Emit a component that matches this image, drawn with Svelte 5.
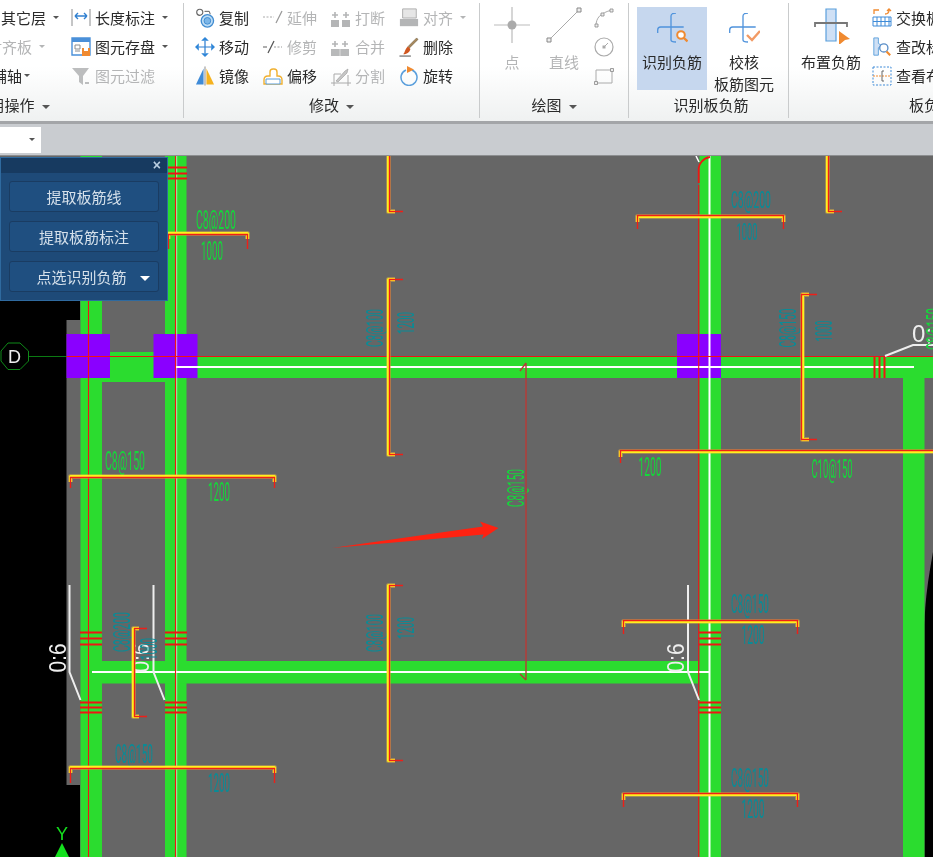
<script>
  // rebars: h = horizontal with hooks down, v = vertical with hook to the right
  const bars = [
    { t: 'h', x1: 168, x2: 247, y: 233, hook: 16, open: true, off: 1 },
    { t: 'v', x: 388, y1: 150, y2: 211, end: 403, off: 1 },
    { t: 'v', x: 388, y1: 279, y2: 454, end: 403, off: 1 },
    { t: 'v', x: 388, y1: 585, y2: 760, end: 403, off: 1 },
    { t: 'v', x: 827, y1: 150, y2: 211, end: 842, off: 1 },
    { t: 'h', x1: 637, x2: 783, y: 216, hook: 13, off: -1 },
    { t: 'v', x: 802, y1: 294, y2: 439, end: 817, off: -1 },
    { t: 'h', x1: 620, x2: 950, y: 451, hook: 12, off: -1 },
    { t: 'h', x1: 70, x2: 274, y: 476, hook: 12, off: 1 },
    { t: 'v', x: 133, y1: 628, y2: 716, end: 147, off: 1 },
    { t: 'h', x1: 70, x2: 274, y: 767, hook: 16, off: 1 },
    { t: 'h', x1: 623, x2: 797, y: 621, hook: 13, off: -1 },
    { t: 'h', x1: 623, x2: 797, y: 794, hook: 13, off: -1 }
  ];

  const yellowPath = (b) => {
    if (b.t === 'h') return `M${b.x1 + 0.5} ${b.y + 6}V${b.y + 0.5}H${b.x2 + 0.5}V${b.y + 6}`;
    return `M${b.end - 8} ${b.y1 + 0.5}H${b.x + 0.5}V${b.y2 + 0.5}H${b.end - 8}`;
  };
  const redPath = (b) => {
    if (b.t === 'h') return `M${b.x1 + 0.5} ${b.y + b.hook}V${b.y + b.off + 0.5}H${b.x2 + 0.5}V${b.y + b.hook}`;
    return `M${b.end} ${b.y1 + 0.5}H${b.x + b.off + 0.5}V${b.y2 + 0.5}H${b.end}`;
  };

  const GREEN = '#14d83a';
  const TEAL = '#0a8b96';

  // x, y = centre of the note, w = length along the text, h = glyph height
  const notes = [
    { s: 'C8@200', x: 216, y: 220, w: 40, h: 19, c: GREEN },
    { s: '1000', x: 212, y: 251, w: 22, h: 19, c: GREEN },
    { s: 'C8@150', x: 125, y: 461, w: 40, h: 19, c: GREEN },
    { s: '1200', x: 219, y: 492, w: 22, h: 19, c: GREEN },
    { s: 'C10@150', x: 832, y: 469, w: 41, h: 19, c: GREEN },
    { s: '1200', x: 650, y: 467, w: 23, h: 19, c: GREEN },
    { s: 'C8@150', x: 515, y: 488, w: 38, h: 18, c: GREEN, rot: true },
    { s: 'C8@150', x: 934, y: 329, w: 42, h: 18, c: GREEN, rot: true },
    { s: 'C8@200', x: 751, y: 199, w: 40, h: 18, c: TEAL },
    { s: '1000', x: 747, y: 231, w: 21, h: 18, c: TEAL },
    { s: 'C8@150', x: 787, y: 328, w: 39, h: 18, c: TEAL, rot: true },
    { s: '1000', x: 823, y: 331, w: 21, h: 18, c: TEAL, rot: true },
    { s: 'C8@100', x: 374, y: 328, w: 38, h: 18, c: TEAL, rot: true },
    { s: '1200', x: 405, y: 323, w: 22, h: 18, c: TEAL, rot: true },
    { s: 'C8@100', x: 374, y: 633, w: 38, h: 18, c: TEAL, rot: true },
    { s: '1200', x: 405, y: 628, w: 22, h: 18, c: TEAL, rot: true },
    { s: 'C8@200', x: 121, y: 632, w: 40, h: 18, c: TEAL, rot: true },
    { s: '1000', x: 148, y: 649, w: 22, h: 18, c: TEAL, rot: true },
    { s: 'C8@150', x: 134, y: 754, w: 38, h: 19, c: TEAL },
    { s: '1200', x: 219, y: 783, w: 22, h: 19, c: TEAL },
    { s: 'C8@150', x: 750, y: 604, w: 38, h: 19, c: TEAL },
    { s: '1200', x: 753, y: 635, w: 23, h: 19, c: TEAL },
    { s: 'C8@150', x: 750, y: 778, w: 38, h: 19, c: TEAL },
    { s: '1200', x: 753, y: 809, w: 23, h: 19, c: TEAL }
  ];

  // stirrup ticks: three short red lines across a beam
  const tickRows = [
    { x: 165, ys: [167, 173, 178] },
    { x: 80, ys: [632, 638, 644] },
    { x: 165, ys: [632, 638, 644] },
    { x: 699, ys: [632, 638, 644] },
    { x: 80, ys: [702, 707, 712] },
    { x: 165, ys: [702, 707, 712] },
    { x: 699, ys: [702, 707, 712] }
  ];

  const leaders = [
    { x: 69.5, tx: 66 },
    { x: 153.5, tx: 149 },
    { x: 688, tx: 684 }
  ];
</script>

<div class="app">
  <div class="ribbon">
    <section class="group g1">
      <div class="body tools">
        <div class="col first">
          <div class="row"><span>其它层</span><i class="caret"></i></div>
          <div class="row off r2"><span>对齐板</span><i class="caret"></i></div>
          <div class="row r3"><span>辅轴</span><i class="caret"></i></div>
        </div>
        <div class="col">
          <div class="row">
            <svg class="ico" viewBox="0 0 20 20">
              <path d="M1 1v17M19 1v17" stroke="#8a8c8e" fill="none" />
              <path d="M4 8h12M4 8l3-3M4 8l3 3M16 8l-3-3M16 8l-3 3" stroke="#2f7fd0" stroke-width="1.4" fill="none" />
            </svg>
            <span>长度标注</span><i class="caret"></i>
          </div>
          <div class="row">
            <svg class="ico" viewBox="0 0 20 20">
              <path d="M1 1h18v17H1z" fill="#fff" stroke="#4a90d9" stroke-width="1.4" />
              <path d="M1 1h18v4H1z" fill="#4a90d9" />
              <path d="M4 8h5v4H4zM4 14h5" stroke="#8a8c8e" fill="none" />
              <path d="M11 11h8v8h-8z" fill="#f08a30" />
              <path d="M13 11h4v3h-4z" fill="#fff" />
            </svg>
            <span>图元存盘</span><i class="caret"></i>
          </div>
          <div class="row off">
            <svg class="ico" viewBox="0 0 20 20">
              <path d="M1 2h17l-6 8v9l-4-3v-6z" fill="#bcbdbe" />
              <path d="M14 17h4" stroke="#bcbdbe" stroke-width="2" />
            </svg>
            <span>图元过滤</span>
          </div>
        </div>
      </div>
      <div class="foot">通用操作<i class="caret"></i></div>
    </section>

    <section class="group g2">
      <div class="body grid">
        <div class="row">
          <svg class="ico" viewBox="0 0 21 20">
            <circle cx="5" cy="4" r="3.2" fill="#fff" stroke="#666" stroke-width="1.2" />
            <path d="M10 3h5l1 3" stroke="#555" fill="none" />
            <circle cx="13" cy="13" r="6.5" fill="#bcdcf5" stroke="#3f8bd0" stroke-width="1.4" />
            <circle cx="13" cy="13" r="3.5" fill="#7bb6e8" stroke="#3f8bd0" />
          </svg>
          <span>复制</span>
        </div>
        <div class="row off">
          <svg class="ico" viewBox="0 0 20 20">
            <path d="M0 9h11" stroke="#aaa" stroke-dasharray="2 1.5" />
            <path d="M13 15l6-12" stroke="#999" stroke-width="1.3" />
          </svg>
          <span>延伸</span>
        </div>
        <div class="row off">
          <svg class="ico" viewBox="0 0 20 20">
            <path d="M0 12h8v7H0zM11 12h8v7h-8z" fill="#b4b5b6" />
            <path d="M4 4v6M1 7h6M15 4v6M12 7h6" stroke="#b4b5b6" stroke-width="1.6" />
          </svg>
          <span>打断</span>
        </div>
        <div class="row off">
          <svg class="ico" viewBox="0 0 20 22">
            <path d="M3 1h15v10H3z" fill="#e6e6e6" stroke="#aaa" />
            <path d="M0 12h20v8H0z" fill="#b4b5b6" />
          </svg>
          <span>对齐</span><i class="caret"></i>
        </div>

        <div class="row">
          <svg class="ico" viewBox="0 0 21 21">
            <path d="M10.5 4v13M4 10.5h13" stroke="#2f7fd0" stroke-width="1.3" />
            <path d="M10.5 0l4 4h-8zM10.5 21l4-4h-8zM0 10.5l4-4v8zM21 10.5l-4-4v8z" fill="#2f86d8" />
          </svg>
          <span>移动</span>
        </div>
        <div class="row off">
          <svg class="ico" viewBox="0 0 20 20">
            <path d="M0 10h4" stroke="#777" stroke-width="1.2" />
            <path d="M5 16l6-12" stroke="#555" stroke-width="1.2" />
            <path d="M11 10h8" stroke="#999" stroke-dasharray="2 1.5" />
          </svg>
          <span>修剪</span>
        </div>
        <div class="row off">
          <svg class="ico" viewBox="0 0 20 20">
            <path d="M0 12h18v7H0z" fill="#b8b9ba" />
            <path d="M4 4v6M1 7h6M14 4v6M11 7h6" stroke="#b4b5b6" stroke-width="1.6" />
            <path d="M9 12v7" stroke="#ddd" />
          </svg>
          <span>合并</span>
        </div>
        <div class="row">
          <svg class="ico" viewBox="0 0 20 21">
            <path d="M9 10l9-9 1.5 1.5-9 9z" fill="#a98a5c" stroke="#6b5a40" stroke-width=".6" />
            <path d="M9 10l2.500 2.500c-1 4-4 5.500-7.500 5.500 2-2 2-6 5-8z" fill="#d0561f" />
            <path d="M0 20h12" stroke="#444" />
          </svg>
          <span>删除</span>
        </div>

        <div class="row">
          <svg class="ico" viewBox="0 0 21 20">
            <path d="M9 2v17H1z" fill="#3f8bd8" />
            <path d="M10.500 0v20" stroke="#888" />
            <path d="M12 2v17h8z" fill="#f5b21f" />
          </svg>
          <span>镜像</span>
        </div>
        <div class="row">
          <svg class="ico" viewBox="0 0 20 20">
            <path d="M1 18v-4c0-3 2-4 4-4h2V6c0-2 1-3 3-3h1c2 0 3 1 3 3v4h1c2 0 4 1 4 4v4z" fill="#fff" stroke="#f0b030" stroke-width="1.400" />
            <path d="M3 13h14v5H3z" fill="#fff" stroke="#5b9fdc" />
          </svg>
          <span>偏移</span>
        </div>
        <div class="row off">
          <svg class="ico" viewBox="0 0 20 20">
            <path d="M0 17h20M3 8v12M17 9v11M3 8h7" stroke="#aaa" fill="none" />
            <path d="M5 15l9-10 3-2-1 4-9 9z" fill="#c6c6c6" stroke="#999" stroke-width=".6" />
          </svg>
          <span>分割</span>
        </div>
        <div class="row">
          <svg class="ico" viewBox="0 0 20 20">
            <path d="M7 4a8 8 0 1 0 6 0" fill="none" stroke="#5b9fdc" stroke-width="1.500" />
            <path d="M8 0l7 3.500-7 3.500z" fill="#f08a30" />
          </svg>
          <span>旋转</span>
        </div>
      </div>
      <div class="foot">修改<i class="caret"></i></div>
    </section>

    <section class="group g3">
      <div class="body draw">
        <div class="big off">
          <svg class="big-ico" viewBox="0 0 38 38">
            <path d="M19 1v36M1 19h36" stroke="#bbb" stroke-width="1.200" />
            <circle cx="19" cy="19" r="4.500" fill="#aaa" />
          </svg>
          <span>点</span>
        </div>
        <div class="big off">
          <svg class="big-ico" viewBox="0 0 38 38">
            <path d="M4 34L34 4" stroke="#aaa" />
            <path d="M2 32h4v4H2zM32 2h4v4h-4z" fill="#eee" stroke="#888" />
          </svg>
          <span>直线</span>
        </div>
        <div class="mini">
          <svg viewBox="0 0 20 20">
            <path d="M2 18C2 10 6 5 18 2" fill="none" stroke="#aaa" />
            <path d="M1 16h3v3H1zM7 5h3v3H7zM16 1h3v3h-3z" fill="#eee" stroke="#888" stroke-width=".8" />
          </svg>
          <svg viewBox="0 0 20 20">
            <circle cx="10" cy="10" r="9" fill="none" stroke="#aaa" stroke-width="1.200" />
            <path d="M10 10l4-4" stroke="#aaa" />
            <path d="M8.500 8.500h3v3h-3z" fill="#aaa" />
          </svg>
          <svg viewBox="0 0 20 20">
            <path d="M2 4h16v13H2z" fill="none" stroke="#aaa" />
            <path d="M.5 15.500h3v3h-3zM16.500 2.500h3v3h-3z" fill="#eee" stroke="#888" stroke-width=".8" />
          </svg>
        </div>
      </div>
      <div class="foot">绘图<i class="caret"></i></div>
    </section>

    <section class="group g4">
      <div class="body neg">
        <div class="big active">
          <svg class="neg-ico" viewBox="0 0 31 30">
            <path d="M14 3c0-2 2-3 5-3M14 3v24c0 2 2 2 5 2M.700 20v-3c0-2 1-3 3-3h23" fill="none" stroke="#4f93dc" stroke-width="1.300" />
            <circle cx="24" cy="22" r="3.800" fill="#fff" stroke="#f08a30" stroke-width="2" />
            <path d="M27 25l3.500 3.500" stroke="#f08a30" stroke-width="2.400" />
          </svg>
          <span>识别负筋</span>
        </div>
        <div class="big">
          <svg class="neg-ico" viewBox="0 0 31 30">
            <path d="M14 3c0-2 2-3 5-3M14 3v24c0 2 2 2 5 2M.700 20v-3c0-2 1-3 3-3h23" fill="none" stroke="#4f93dc" stroke-width="1.300" />
            <path d="M18 22l5 5 8-9" fill="none" stroke="#f29a64" stroke-width="2.400" />
          </svg>
          <span>校核</span>
          <span>板筋图元</span>
        </div>
      </div>
      <div class="foot">识别板负筋</div>
    </section>

    <section class="group g5">
      <div class="body tools5">
        <div class="big">
          <svg class="big-ico" viewBox="0 0 38 38">
            <path d="M14 3h10v32H14z" fill="#cfe0f5" stroke="#5b9fdc" stroke-width="1.200" />
            <path d="M3 21v-4h32v4" fill="none" stroke="#777" stroke-width="1.800" />
            <path d="M27 25l11 8-5 1-6 5z" fill="#f08a30" />
          </svg>
          <span>布置负筋</span>
        </div>
        <div class="col small-col">
          <div class="row">
            <svg class="ico" viewBox="0 0 20 20">
              <path d="M1 9h18v9H1zM1 13.500h18M5 9v9M9 9v9M13 9v9M17 9v9" fill="none" stroke="#3f8bd8" />
              <path d="M2 6V2h5M13 6c3 0 4-1 4-4M15 3l2-2 2 2" fill="none" stroke="#f08a30" stroke-width="1.300" />
            </svg>
            <span>交换板筋</span>
          </div>
          <div class="row">
            <svg class="ico" viewBox="0 0 20 22">
              <path d="M1 1h5v6l3 2-3 3v8H1z" fill="#cfe0f5" stroke="#5b9fdc" />
              <circle cx="12" cy="12" r="4.500" fill="#fff" stroke="#5b8fc8" stroke-width="1.500" />
              <path d="M15 16l4 4" stroke="#f08a30" stroke-width="2.400" />
            </svg>
            <span>查改标注</span>
          </div>
          <div class="row">
            <svg class="ico" viewBox="0 0 20 20">
              <path d="M1 1h18v18H1z" fill="none" stroke="#3f8bd8" stroke-dasharray="2 1.500" />
              <path d="M1 10h18" stroke="#f08a30" stroke-dasharray="2 1" />
              <path d="M12 5h-2v10h2" fill="none" stroke="#666" />
            </svg>
            <span>查看布筋</span>
          </div>
        </div>
      </div>
      <div class="foot">板负筋二次编辑</div>
    </section>
  </div>

  <div class="strip">
    <div class="combo"><i class="caret"></i></div>
  </div>

  <div class="canvas">
    <svg class="cad" viewBox="0 156 933 701">
      <rect x="0" y="156" width="933" height="701" fill="#666" />
      <path d="M0 290H80V320H66.500V785H80V857H0Z" fill="#000" />
      <path d="M933 552C928 580 925 600 924.500 625V857H933Z" fill="#000" />

      <!-- beams -->
      <g fill="#2bdc2f">
        <rect x="80.500" y="156" width="21.500" height="701" />
        <rect x="165" y="156" width="21.500" height="701" />
        <rect x="699.500" y="156" width="21.500" height="701" />
        <rect x="903" y="357" width="21.500" height="500" />
        <rect x="102" y="352" width="63" height="30" />
        <rect x="186" y="357" width="747" height="21" />
        <rect x="102" y="661" width="596" height="22.500" />
      </g>
      <g fill="#8a00ff">
        <rect x="66.500" y="334" width="43.500" height="44" />
        <rect x="153.500" y="334" width="44" height="44" />
        <rect x="677" y="334" width="44" height="44" />
      </g>

      <!-- axis -->
      <path d="M28 356.500H66.500" stroke="#0b7a12" />
      <path d="M8 343L20 343L28.500 351L28.500 361L20 369.500L8 369.500L1 361L1 351Z" fill="none" stroke="#0f8a18" />
      <text class="axis" x="14.500" y="362.500" text-anchor="middle">D</text>
      <text class="axis-y" x="62" y="840" text-anchor="middle">Y</text>
      <path d="M62 843L69 857H55Z" fill="#14e01e" />

      <!-- white centre lines -->
      <g stroke="#fff" fill="none">
        <path d="M176 367H914" stroke-width="2" />
        <path d="M92 672H709" stroke-width="2" />
        <path d="M709.500 156V857" stroke-width="2" />
        <path d="M176.500 156V857" stroke-width="1.500" opacity=".5" />
      </g>

      <!-- red axis lines -->
      <g stroke="#f01414" fill="none" stroke-width="1.100">
        <path d="M66.500 356.500H933" />
        <path d="M88.500 290V857" />
        <path d="M175.500 156V857" />
        <path d="M698.700 185V857" />
        <path d="M698.700 183V168C699 164 703 158 710 157" stroke-width="1.800" />
      </g>
      <path d="M696 156L699 162" stroke="#fff" stroke-width="1.500" />

      {#each tickRows as row}
        {#each row.ys as y}
          <path d="M{row.x} {y + 0.5}h22" stroke="#f01414" stroke-width="2" />
        {/each}
      {/each}
      <path d="M874.500 357v21M879.500 357v21M884.500 357v21" stroke="#f01414" stroke-width="2" />

      <!-- leaders -->
      {#each leaders as l}
        <path d="M{l.x} 585V672L{l.x + 11} 700" fill="none" stroke="#eee" stroke-width="2" />
        <text class="lead" textLength="29" lengthAdjust="spacingAndGlyphs" transform="translate({l.tx} 658) rotate(-90)" text-anchor="middle">0:6</text>
      {/each}
      <path d="M885 356L913 345H933" fill="none" stroke="#eee" stroke-width="2" />
      <text class="lead" x="912" y="342">0;6</text>

      <!-- notes -->
      {#each notes as n}
        <text
          class="note"
          fill={n.c}
          font-size={n.h * 1.35}
          textLength={n.w}
          lengthAdjust="spacingAndGlyphs"
          text-anchor="middle"
          dominant-baseline="central"
          transform="translate({n.x} {n.y}){n.rot ? ' rotate(-90)' : ''}"
        >{n.s}</text>
      {/each}

      <!-- rebars -->
      {#each bars as b}
        <path d={yellowPath(b)} fill="none" stroke="#ffc23c" stroke-width="5" stroke-linejoin="round" opacity=".4" />
        <path d={yellowPath(b)} fill="none" stroke="#fff01e" stroke-width="3" stroke-linejoin="round" />
        <path d={redPath(b)} fill="none" stroke="#ee1f18" stroke-width="1.400" />
      {/each}

      <!-- dimension line -->
      <path d="M526 363V680M526 363L520 371M526 680L520 674" fill="none" stroke="#b83a36" stroke-width="1.400" />

      <!-- markup arrow -->
      <path d="M332 548L483 526.500L480 521.500L498.500 528L482 539L483.500 534.500Z" fill="#ff2211" />
    </svg>

    <div class="panel">
      <div class="panel-title"><span class="close">×</span></div>
      <div class="panel-body">
        <button>提取板筋线</button>
        <button>提取板筋标注</button>
        <button class="split">点选识别负筋<i class="caret white"></i></button>
      </div>
    </div>
  </div>
</div>

<style>
  :global(body) {
    margin: 0;
    background: #666;
  }

  .app {
    width: 933px;
    height: 857px;
    overflow: hidden;
    display: flex;
    flex-direction: column;
    font-family: "Noto Sans CJK SC", "Liberation Sans", sans-serif;
    font-size: 15px;
    color: #2a2a2a;
    filter: blur(0.35px);
  }

  .ribbon {
    height: 121px;
    flex: none;
    display: flex;
    background: linear-gradient(#fff 0, #fff 55%, #eff1f1 100%);
    border-bottom: 3px solid #a3a5a8;
  }

  .group {
    flex: none;
    display: flex;
    flex-direction: column;
    box-sizing: border-box;
    position: relative;
    overflow: hidden;
    border-right: 1px solid #c9cbcc;
    margin: 3px 0 3px;
  }

  .g1 { width: 184px; overflow: visible; }
  .g2 { width: 296px; }
  .g3 { width: 149px; }
  .g4 { width: 160px; }
  .g5 { width: 144px; border-right: 0; }

  .body { flex: 1; min-height: 0; }

  .foot {
    height: 21px;
    line-height: 21px;
    margin-bottom: 3px;
    text-align: center;
    white-space: nowrap;
    font-size: 15px;
  }

  .foot .caret {
    border-left-width: 4px;
    border-right-width: 4px;
    border-top-width: 4px;
  }

  .g1 .foot {
    width: 342px;
    margin-left: -159px;
  }

  .g4 .foot { padding-left: 5px; }

  .g5 .foot {
    text-align: left;
    padding-left: 120px;
  }

  .row {
    height: 29px;
    display: flex;
    align-items: center;
    white-space: nowrap;
  }

  .first .row { justify-content: flex-end; }
  .first .r2 { padding-right: 14px; }
  .first .r3 { padding-right: 29px; }
  .first .r3 .caret { margin-left: 2px; }

  .off { color: #b4b5b6; }

  .ico {
    width: 20px;
    height: 20px;
    flex: none;
    margin-right: 4px;
  }

  .caret {
    display: inline-block;
    width: 0;
    height: 0;
    margin-left: 7px;
    border-left: 3px solid transparent;
    border-right: 3px solid transparent;
    border-top: 3px solid #555;
    vertical-align: middle;
  }

  .off .caret { border-top-color: #b4b5b6; }
  .white { border-top-color: #fff; margin-left: 13px; border-left-width: 5px; border-right-width: 5px; border-top-width: 5px; }

  .tools {
    display: flex;
    justify-content: flex-end;
    gap: 12px;
    padding-right: 15px;
  }

  .grid {
    display: grid;
    grid-template-columns: repeat(4, 54px);
    grid-auto-rows: 29px;
    column-gap: 14px;
    padding-left: 11px;
  }

  .draw {
    display: flex;
    padding-left: 13px;
  }

  .big {
    display: flex;
    flex-direction: column;
    align-items: center;
    white-space: nowrap;
    line-height: 22px;
  }

  .big-ico {
    width: 38px;
    height: 38px;
    margin: 3px 0 7px;
    flex: none;
  }

  .neg-ico {
    width: 31px;
    height: 30px;
    margin: 6px 0 8px;
    flex: none;
  }

  .draw .big { width: 38px; margin-right: 14px; }

  .mini {
    display: flex;
    flex-direction: column;
    gap: 9px;
    margin: 5px 0 0 -3px;
  }

  .mini svg { width: 20px; height: 20px; }

  .neg {
    display: flex;
    padding-left: 8px;
  }

  .neg .big { width: 70px; height: 83px; margin-top: 4px; }
  .neg .big:last-child { width: 74px; }
  .active { background: #c6d7ee; }

  .tools5 {
    display: flex;
    padding-left: 12px;
    gap: 11px;
  }

  .tools5 .big { width: 61px; }

  .strip {
    height: 31px;
    flex: none;
    background: #c9ccd0;
    border-bottom: 1px solid #8c8e90;
    display: flex;
    align-items: center;
  }

  .combo {
    width: 41px;
    height: 26px;
    background: #fff;
    display: flex;
    align-items: center;
    justify-content: flex-end;
    box-sizing: border-box;
  }

  .combo .caret { margin-right: 6px; }

  .canvas {
    flex: 1;
    position: relative;
    min-height: 0;
  }

  .cad {
    display: block;
    width: 933px;
    height: 701px;
  }

  .note {
    font-family: Roboto, "Liberation Sans", sans-serif;
    font-weight: 400;
  }

  .axis {
    font-family: "Liberation Sans", sans-serif;
    font-size: 18px;
    fill: #eee;
  }

  .axis-y {
    font-family: "Liberation Sans", sans-serif;
    font-size: 18px;
    fill: #14e01e;
  }

  .lead {
    font-family: "Liberation Sans", sans-serif;
    font-size: 24px;
    fill: #eee;
  }

  .panel {
    position: absolute;
    left: 0;
    top: 1px;
    width: 168px;
    height: 144px;
    box-sizing: border-box;
    background: #1e4a78;
    border: 1px solid #2f6a9f;
  }

  .panel-title {
    height: 15px;
    background: #173a60;
    display: flex;
    justify-content: flex-end;
    align-items: center;
    padding-right: 6px;
  }

  .close {
    color: #b9cde0;
    font-family: "Liberation Sans", sans-serif;
    font-size: 14px;
    font-weight: 700;
    line-height: 15px;
  }

  .panel-body {
    display: flex;
    flex-direction: column;
    gap: 9px;
    padding: 8px 8px 0;
  }

  button {
    height: 31px;
    padding: 0;
    background: #1f4f80;
    border: 1px solid #1a3c62;
    border-radius: 3px;
    color: #d5e0ea;
    font-family: inherit;
    font-size: 15px;
    line-height: 1;
  }

  .split { padding-left: 18px; }
</style>
